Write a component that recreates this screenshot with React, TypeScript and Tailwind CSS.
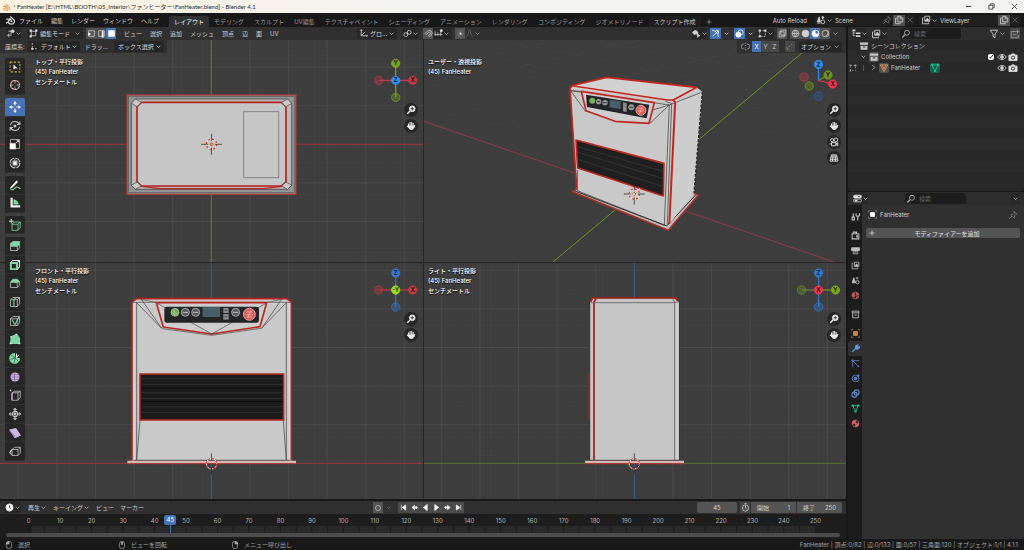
import React from "react";

type P = { children?: React.ReactNode; className?: string };

const Ic = ({ children, className = "size-2.5" }: P) => (
  <svg viewBox="0 0 16 16" className={"shrink-0 " + className} fill="none" stroke="currentColor" strokeWidth="1.4" aria-hidden="true">
    {children}
  </svg>
);
const Chev = () => (
  <Ic className="size-[7px] text-[#b5b5b5]"><path d="M3.5 6 8 10.5 12.5 6" strokeWidth="1.8" /></Ic>
);

const Magnify = () => <Ic className="size-2.5 text-[#b0b0b0]"><circle cx="9.5" cy="6" r="4" /><path d="M6.5 9 2 13.5" strokeWidth="2" /></Ic>;
const Pin = () => <Ic className="size-2.5 text-[#8a8a8a]"><path d="m9.5 2 4.5 4.5-1.5.7-2 2 .2 2.8-1.2 1-5-5 1-1.2 2.6.2 2-2zM6.5 9.5 2 14" strokeWidth="1.1" /></Ic>;
const Copy = () => <Ic><path d="M6 2h4.500l3.500 3.500V11H6zM10 2v4h4M5 5H2.500v9H10v-2" /></Ic>;
const Close = () => <Ic className="size-2 text-[#6a6a6a]"><path d="m3 3 10 10M13 3 3 13" /></Ic>;
const SceneIc = () => <Ic><path d="M5 3 2 11h5zM10 2l3 2-3 2z" fill="currentColor" /><circle cx="11" cy="11" r="3" /><path d="M2 13h5" /></Ic>;
const Layers = () => <Ic><path d="M6 2h8v8H6zM4 4.500H2.500V14H12v-2" /><path d="m7 9 3-4 3 4z" fill="currentColor" /></Ic>;
const Box = () => <Ic><path d="M1.500 2.500h13v3.500h-13zM2.500 7.500h11V14h-11z" fill="currentColor" stroke="none" /><path d="M6 9.500h4" stroke="#282828" strokeWidth="1.600" /></Ic>;
const Camera = () => <Ic className="size-2.5 text-[#e0e0e0]"><path d="M1.500 5h3l1.500-2h4l1.500 2h3v8.500h-13z" fill="currentColor" /><circle cx="8" cy="9" r="2.600" stroke="#282828" fill="#e0e0e0" /></Ic>;
const Eye = () => <Ic className="size-2.5 text-[#d0d0d0]"><path d="M1 8q7-8.500 14 0-7 8.500-14 0z" /><circle cx="8" cy="8" r="2.300" fill="currentColor" /></Ic>;
const BlenderIc = ({ c, className }: { c: string; className: string }) => (
  <Ic className={className}>
    <path d="M8.500 2.500 14 7.500q2 2 1 4-1.300 3-4.800 3Q6 14.500 5.200 11L1.500 13M2 6.500h7M5.200 10 10 6" stroke={c} strokeWidth="1.900" />
    <circle cx="10.200" cy="10" r="1.700" fill={c} stroke="none" />
  </Ic>
);

const Menu = ({ children }: P) => <button type="button" className="whitespace-nowrap">{children}</button>;

const workspaces = ["モデリング", "スカルプト", "UV編集", "テクスチャペイント", "シェーディング", "アニメーション", "レンダリング", "コンポジティング", "ジオメトリノード"];

function TitleBar() {
  return (
    <header className="flex h-[13px] shrink-0 items-center gap-[3px] bg-linear-to-r from-[#fcf2df] to-[#f3f3f1] to-40% pl-[2px] text-[#2a2a2a]">
      <BlenderIc c="#e07a1c" className="size-2" />
      <h1 className="grow whitespace-nowrap font-[Lato,'Noto_Sans_CJK_JP',sans-serif] text-[6px] leading-none">
        * FanHeater [E:\HTML\BOOTH\05_Interior\ファンヒーター\FanHeater.blend] - Blender 4.1
      </h1>
      <button type="button" aria-label="最小化" className="flex w-5 justify-center"><Ic className="size-[7px]"><path d="M2 8h12" strokeWidth="2" /></Ic></button>
      <button type="button" aria-label="元に戻す" className="flex w-5 justify-center"><Ic className="size-[7px]"><path d="M2 5h9v9H2zM5 4V2h9v9h-2" strokeWidth="1.800" /></Ic></button>
      <button type="button" aria-label="閉じる" className="flex w-5 justify-center"><Ic className="size-[7px]"><path d="m2 2 12 12M14 2 2 14" strokeWidth="1.800" /></Ic></button>
    </header>
  );
}

function TopBar() {
  return (
    <div className="flex h-[14px] shrink-0 items-center bg-[#181818] pl-[5px] text-[#cfcfcf]">
      <BlenderIc c="#d8d8d8" className="mr-1 size-2.5" />
      <nav className="flex gap-2">
        {["ファイル", "編集", "レンダー", "ウィンドウ", "ヘルプ"].map((m) => <Menu key={m}>{m}</Menu>)}
      </nav>
      <nav className="ml-2.5 flex h-full items-end text-[#989898]">
        <button type="button" className="h-[11px] rounded-t-xs bg-[#303030] px-[5px] text-white">レイアウト</button>
        {workspaces.map((w) => <button type="button" key={w} className="h-[11px] whitespace-nowrap px-[5px]">{w}</button>)}
        <button type="button" className="h-[11px] whitespace-nowrap bg-[#1e1e1e] px-[5px] text-[#c8c8c8]">スクリプト作成</button>
        <button type="button" aria-label="ワークスペースを追加" className="flex h-[11px] items-center px-1"><Ic className="size-2"><path d="M8 3v10M3 8h10" /></Ic></button>
      </nav>
      <span className="ml-auto mr-[7px] whitespace-nowrap">Auto Reload</span>
      <div className="mr-1 flex h-[11px] w-[101px] items-center rounded-xs bg-[#1f1f1f] pl-0.5">
        <SceneIc /><Chev />
        <input aria-label="シーン" defaultValue="Scene" className="ml-0.5 w-0 grow bg-transparent outline-none" />
        <Pin />
        <button type="button" aria-label="新規シーン" className="ml-px flex h-[11px] items-center bg-[#505050] px-px"><Copy /></button>
        <span className="px-px"><Close /></span>
      </div>
      <div className="mr-1 flex h-[11px] w-[101px] items-center rounded-xs bg-[#1f1f1f] pl-0.5">
        <Layers /><Chev />
        <input aria-label="ビューレイヤー" defaultValue="ViewLayer" className="ml-0.5 w-0 grow bg-transparent outline-none" />
        <button type="button" aria-label="新規レイヤー" className="flex h-[11px] items-center bg-[#505050] px-px"><Copy /></button>
        <span className="px-px"><Close /></span>
      </div>
    </div>
  );
}

const Drop = ({ label, value, icon, className = "" }: { label: string; value: string; icon?: React.ReactNode; className?: string }) => (
  <label className={"flex h-[11px] items-center rounded-xs bg-[#262626] px-0.5 text-[#dcdcdc] " + className}>
    {icon}
    <select aria-label={label} className="w-0 grow appearance-none bg-transparent pl-[2px] outline-none">
      <option>{value}</option>
    </select>
    <Chev />
  </label>
);
const IconBtn = ({ label, children, className = "" }: P & { label: string }) => (
  <button type="button" aria-label={label} className={"flex h-[11px] items-center justify-center " + className}>{children}</button>
);

function ViewHeader() {
  return (
    <div className="flex h-[13px] shrink-0 items-center bg-[#303030] pl-1.5 pr-1.5 text-[#cfcfcf]">
      <div className="flex flex-1 items-center">
        <IconBtn label="エディタータイプ" className="mr-1.5 w-[15px] rounded-xs bg-[#262626]">
          <Ic className="size-[9px]"><path d="M1 11h9M5 8v7M4 4h9M9 2v8" /><circle cx="12" cy="4" r="2.500" fill="currentColor" /></Ic><Chev />
        </IconBtn>
        <Drop label="モード" value="編集モード" className="mr-[3px] w-[56px]" icon={<Ic className="size-[9px]"><path d="M4 4h8v8H4z" /><path d="M1 1h4v4H1zM11 1h4v4h-4zM1 11h4v4H1z" fill="currentColor" stroke="none" /></Ic>} />
        <IconBtn label="頂点選択" className="w-2.5 bg-[#505050]"><Ic className="size-[9px]"><path d="M3 3h10v10H3z" /><circle cx="4" cy="9" r="2.300" fill="white" stroke="none" /></Ic></IconBtn>
        <IconBtn label="辺選択" className="w-2.5 bg-[#505050]"><Ic className="size-[9px]"><path d="M3 3h10v10H3z" /><path d="M10 3v12" stroke="white" strokeWidth="3" /></Ic></IconBtn>
        <IconBtn label="面選択" className="mr-2 w-2.5 bg-[#4772b3]"><Ic className="size-[9px]"><path d="M3 3h10v10H3z" fill="white" stroke="white" /></Ic></IconBtn>
        <nav className="flex gap-2">
          {["ビュー", "選択", "追加", "メッシュ", "頂点", "辺", "面", "UV"].map((m) => <Menu key={m}>{m}</Menu>)}
        </nav>
      </div>
      <div className="mr-2 flex items-center">
        <Drop label="座標系" value="グロ…" className="mr-1.5 w-10" icon={<Ic className="size-[9px]"><path d="M4 1v11h11M4 12l7-7M2 3l2-2 2 2M13 10l2 2-2 2" /></Ic>} />
        <IconBtn label="ピボット" className="mr-1 w-4 rounded-xs bg-[#262626]"><Ic className="size-[9px]"><circle cx="5" cy="10" r="3.500" /><circle cx="11" cy="6" r="3.500" /><circle cx="8" cy="8" r="1" fill="currentColor" /></Ic><Chev /></IconBtn>
        <IconBtn label="スナップ" className="w-2.5 bg-[#545454]"><Ic className="size-[9px]"><path d="m2 8 4-4q4-3 7 0t0 7l-3 3-2-2 3-3q1-2 0-3t-3 0L4 10z" /></Ic></IconBtn>
        <IconBtn label="スナップ先" className="mr-1 w-[18px] bg-[#262626]"><Ic className="size-[9px]"><path d="M2 4v8M7 6v6M12 4v8M1 10h14" /><circle cx="13" cy="3" r="2" fill="white" /></Ic><Chev /></IconBtn>
        <IconBtn label="プロポーショナル編集" className="w-2.5 bg-[#545454]"><Ic className="size-[9px]"><circle cx="8" cy="8" r="5" stroke="#777" /><circle cx="8" cy="8" r="2" fill="white" stroke="none" /></Ic></IconBtn>
        <IconBtn label="減衰" className="w-4 text-[#777] opacity-80"><Ic className="size-[9px]"><path d="M1 14q4 0 5-7t2-5q1-1 2 5t5 7" /></Ic><Chev /></IconBtn>
      </div>
      <div className="flex flex-1 items-center justify-end">
        <IconBtn label="表示可能" className="mr-[3px] w-[15px] bg-[#262626]"><Ic className="size-[9px]"><path d="M1 6q4-6 9-1 2 3-2 4-6 2-7-3z" fill="currentColor" /><path d="m9 8 5 4-3 1-1 2z" fill="currentColor" /></Ic><Chev /></IconBtn>
        <IconBtn label="ギズモ" className="w-[11px] bg-[#4772b3] text-white"><Ic className="size-[9px]"><path d="M2 2q10 2 11 12M3 13 13 3M8 3h5v5" /></Ic></IconBtn>
        <IconBtn label="ギズモ設定" className="mr-[3px] w-2.5"><Chev /></IconBtn>
        <IconBtn label="オーバーレイ" className="w-[11px] bg-[#4772b3] text-white"><Ic className="size-[9px]"><circle cx="6" cy="10" r="4.500" fill="currentColor" /><circle cx="10" cy="6" r="4.500" /></Ic></IconBtn>
        <IconBtn label="オーバーレイ設定" className="mr-0.5 w-2.5"><Chev /></IconBtn>
        <IconBtn label="メッシュ編集表示" className="mr-[3px] w-[17px] bg-[#262626]"><Ic className="size-[9px]"><path d="M3 3h10v10H3z" strokeDasharray="3 2" /><path d="M1 1h4v4H1zM11 1h4v4h-4zM1 11h4v4H1z" fill="currentColor" stroke="none" /></Ic><Chev /></IconBtn>
        <IconBtn label="透過" className="mr-[3px] w-2.5 bg-[#505050]"><Ic className="size-[9px]"><path d="M2 5h9v9H2zM5 2h9v9H5z" /></Ic></IconBtn>
        <IconBtn label="ワイヤーフレーム" className="w-2.5 bg-[#505050]"><Ic className="size-[9px]"><circle cx="8" cy="8" r="6" /><path d="M2 8h12M8 2q-5 6 0 12 5-6 0-12" /></Ic></IconBtn>
        <IconBtn label="ソリッド" className="w-2.5 bg-[#505050]"><Ic className="size-[9px]"><circle cx="8" cy="8" r="6" fill="currentColor" /></Ic></IconBtn>
        <IconBtn label="マテリアル" className="w-2.5 bg-[#4772b3] text-white"><Ic className="size-[9px]"><circle cx="8" cy="8" r="6" /><path d="M8 2a6 6 0 0 0 0 12 6 6 0 0 0 6-6H8z" fill="currentColor" stroke="none" /></Ic></IconBtn>
        <IconBtn label="レンダー" className="w-2.5 bg-[#505050]"><Ic className="size-[9px]"><circle cx="8" cy="8" r="6" /><path d="M11 4q4 6-3 8" /></Ic></IconBtn>
        <IconBtn label="シェーディング設定" className="w-2.5"><Chev /></IconBtn>
      </div>
    </div>
  );
}

const step = 38.6;
const range = (a: number, b: number) => Array.from({ length: b - a + 1 }, (_, i) => a + i);

function Grid({ ox, oy }: { ox: number; oy: number }) {
  return (
    <g>
      <g stroke="#424242" strokeWidth="0.5">
        {range(-60, 60).map((i) => <path key={i} d={`M${ox + (i * step) / 10} 0V550`} />)}
        {range(-110, 60).map((i) => <path key={i} d={`M0 ${oy + (i * step) / 10}H1024`} />)}
      </g>
      <g stroke="#4d4d4d" strokeWidth="0.8">
        {range(-6, 6).map((i) => <path key={i} d={`M${ox + i * step} 0V550`} />)}
        {range(-6, 6).map((i) => <path key={i} d={`M0 ${oy + i * step}H1024`} />)}
      </g>
    </g>
  );
}

const RED = "#c13b45", GREEN = "#79a31c", BLUE = "#2f7ad0";

type Ball = { x: number; y: number; c: string; t?: string; hollow?: boolean; line?: boolean };
function Gizmo({ cx, cy, balls }: { cx: number; cy: number; balls: Ball[] }) {
  return (
    <g transform={`translate(${cx} ${cy})`}>
      {balls.filter((b) => b.line).map((b, i) => <path key={i} d={`M0 0L${b.x} ${b.y}`} stroke={b.c} strokeWidth="1.2" />)}
      {balls.map((b, i) => (
        <g key={i}>
          <circle cx={b.x} cy={b.y} r="4.200" fill={b.c} fillOpacity={b.hollow ? 0.35 : 1} stroke={b.c} strokeWidth="0.7" />
          {b.t && <text x={b.x} y={b.y + 2} fontSize="6" fontWeight="600" textAnchor="middle" fill="#101010">{b.t}</text>}
        </g>
      ))}
    </g>
  );
}

function Cursor({ x, y, arms = true }: { x: number; y: number; arms?: boolean }) {
  return (
    <g transform={`translate(${x} ${y})`} fill="none">
      <circle r="5.200" stroke="#f4f4f4" />
      <circle r="5.200" stroke="#cf332b" strokeWidth="1.200" strokeDasharray="2 2.080" />
      <path d="M0-10.500v7M0 3.500v7" stroke="#1c1c1c" strokeWidth="0.7" />
      {arms && <path d="M-10.500 0h7M3.500 0h7" stroke="#1c1c1c" strokeWidth="0.7" />}
      {arms && <circle r="1.400" fill="#e8a040" stroke="#6b3d10" strokeWidth="0.500" />}
    </g>
  );
}

function Panel() {
  return (
    <g>
      <rect x="133" y="140" width="284" height="48" rx="8" fill="#232426" />
      <circle cx="165" cy="157" r="12" fill="#6fae52" stroke="#b4c8a8" strokeWidth="2" />
      <path d="M159 151l12 12M157 158l9 7" stroke="#dfeeda" strokeWidth="2" />
      {[196, 227, 347].map((x) => (
        <g key={x}><circle cx={x} cy="157" r="12" fill="#55585a" stroke="#a8a8a8" strokeWidth="3" /><path d={`M${x - 8} 157h16`} stroke="#c4c4c4" strokeWidth="3" /></g>
      ))}
      <rect x="248" y="141" width="52" height="30" fill="#466069" />
      <rect x="310" y="144" width="16" height="15" fill="#8b8b8b" /><rect x="310" y="162" width="16" height="17" fill="#8b8b8b" />
      <path d="M313 151h10M313 170h10" stroke="#333" strokeWidth="2" />
      <circle cx="388" cy="163" r="18" fill="#d75c58" stroke="#e6a29e" strokeWidth="3" />
      <path d="M378 156h20M377 164h22M380 171h16M391 151l-8 23" stroke="#f1c0bd" strokeWidth="2" />
    </g>
  );
}

const svgCls = "absolute inset-0 size-full font-[Inter,sans-serif]";

function TopView() {
  return (
    <svg viewBox="0 40 423 222" preserveAspectRatio="xMidYMid slice" className={svgCls}>
      <Grid ox={211.3} oy={144.3} />
      <path d="M0 144.300H423" stroke="#98343d" /><path d="M211.300 40V262" stroke="#5f8220" />
      <g transform="translate(120 50) scale(.3333)" fill="none">
        <rect x="21" y="135" width="507" height="298" fill="#949494" stroke="#a83a35" strokeWidth="4" />
        <rect x="26" y="140" width="497" height="288" stroke="#555" strokeWidth="2" />
        <path d="M46 147H503L515 160V406L503 418H46L34 406V160z" fill="#b9b9b9" stroke="#4a4a4a" strokeWidth="2.500" />
        <path d="M64 157H485L498 170V396L485 408H64L51 396V170z" fill="#c6c6c6" stroke="#b3231f" strokeWidth="5" />
        <path d="M51 397 64 409 120 416H430L485 409 498 397" stroke="#c0241d" strokeWidth="4" />
        <g fill="#c8c8c8" stroke="#444" strokeWidth="2"><path d="M46 147l18 10-13 13-17-10zM503 147l-18 10 13 13 17-10zM34 406l17-10 13 12-18 10zM515 406l-17-10-13 12 18 10z" /></g>
        <rect x="371" y="185" width="105" height="198" stroke="#858585" strokeWidth="3" />
      </g>
      <Cursor x={211.5} y={144.3} />
      <Gizmo cx={395.7} cy={80.4} balls={[{ x: -17, y: 0, c: RED, hollow: true, line: true }, { x: 17, y: 0, c: RED, t: "X", line: true }, { x: 0, y: -17, c: GREEN, t: "Y", line: true }, { x: 0, y: 17, c: GREEN, hollow: true, line: true }, { x: 0, y: 0, c: "#2f8cf0", t: "Z" }]} />
    </svg>
  );
}

function UserView() {
  return (
    <svg viewBox="424 40 422 222" preserveAspectRatio="xMidYMid slice" className={svgCls}>
      <g stroke="#484848" strokeWidth="0.8">
        <path d="M423 52 846 150M423 88 640 40M423 121 790 40M500 40 846 110M590 40 846 85M680 40 846 66M423 140 846 48M423 70 560 40M423 45 846 125" opacity=".65" />
      </g>
      <path d="M423 121 834 262" stroke="#8f3a49" /><path d="M553 262 815 42" stroke="#6f9422" />
      <g transform="translate(550 50) scale(.3333)" fill="none" strokeLinejoin="round">
        <path d="M67 425 82 415 432 430 445 435 355 541z" fill="#bdbdbd" stroke="#a8302b" strokeWidth="5" />
        <path d="M72 422 350 528 438 434" stroke="#2c2c2c" strokeWidth="3" />
        <path d="M60 115 75 106 170 82 440 112 457 125 432 430 350 524 82 422z" fill="#c9c9c9" />
        <path d="M375 155 457 125 432 430 358 522z" fill="#cdcdcd" />
        <path d="M60 115 75 106 170 82 440 112 370 150z" fill="#d2d2d2" />
        <path d="M457 125 432 430" stroke="#222" strokeWidth="4" strokeDasharray="9 4" />
        <path d="M62 122 358 165 452 128M358 165 343 526M82 422 343 526M347 155 365 160 352 524M83 360 82 422M100 125 62 122 108 186M300 220 358 165 195 214M125 175 195 214" stroke="#333" strokeWidth="2" />
        <path d="M60 115 68 106 170 82 440 112" stroke="#c4261f" strokeWidth="5" />
        <path d="M440 112 370 150 352 150 70 108" stroke="#c4261f" strokeWidth="5" />
        <path d="M367 149Q378 154 375 168L358 522" stroke="#c4261f" strokeWidth="6" />
        <path d="M60 115 80 418" stroke="#b62b25" strokeWidth="5" />
        <path d="M94 124 313 158 297 220 195 214 108 182z" fill="#cecece" stroke="#bf2720" strokeWidth="5" />
        <path d="M108 134 298 164 290 205 111 171z" fill="#242528" />
        <circle cx="127" cy="152" r="9" fill="#75b35a" /><circle cx="146" cy="155" r="8" fill="#9a9a9a" /><circle cx="165" cy="158" r="8" fill="#9a9a9a" />
        <path d="M141 155h10M160 158h10" stroke="#303030" strokeWidth="3" />
        <path d="M179 149l33 5v23l-33-5z" fill="#466069" /><path d="M219 157l11 2v27l-11-2z" fill="#8c8c8c" /><circle cx="244" cy="172" r="9" fill="#9a9a9a" /><path d="M238 172h12" stroke="#303030" strokeWidth="3" />
        <circle cx="273" cy="181" r="15" fill="#dc5a55" stroke="#eaa29e" strokeWidth="3" /><path d="M265 176h16M264 183h18M276 171l-7 20" stroke="#f5c4c0" strokeWidth="2" />
        <path d="M78 270 342 340 340 438 83 354z" fill="#1f1f20" stroke="#bd2a24" strokeWidth="5" />
        <path d="M82 290 340 364M82 306 340 386M83 328 340 410" stroke="#343434" strokeWidth="3" />
      </g>
      <Cursor x={634.3} y={194} />
      <path d="m628 188 12 12M640 188l-12 12" stroke="#efc9b8" strokeWidth="0.800" />
      <Gizmo cx={818.5} cy={80.500} balls={[{ x: -14.500, y: -3.500, c: RED, hollow: true }, { x: 0, y: 15.700, c: "#2d5ea0", hollow: true }, { x: -9.300, y: 5.500, c: GREEN, hollow: true }, { x: 0, y: -16, c: "#2f8cf0", t: "Z", line: true }, { x: 9.500, y: -5.500, c: "#6b9420", t: "Y", line: true }, { x: 14.200, y: 3.500, c: "#f0354f", t: "X", line: true }]} />
    </svg>
  );
}

function FrontView() {
  return (
    <svg viewBox="0 263 423 236" preserveAspectRatio="xMidYMid slice" className={svgCls}>
      <Grid ox={211.3} oy={463.3} />
      <path d="M0 463.300H423" stroke="#98343d" /><path d="M211.300 262V499" stroke="#2d5f9c" />
      <g transform="translate(120 260) scale(.3333)" fill="none" strokeLinejoin="round">
        <path d="M36 604V126L50 115H500L514 126V604z" fill="#c9c9c9" />
        <path d="M36 602V126L50 116H500L514 126V602" stroke="#b3231f" strokeWidth="5" />
        <path d="M42 602V128H508V602" stroke="#d8d8d8" strokeWidth="5" />
        <path d="M50 600V127M499 600V127M38 127H512M50 128 125 205 62 115M499 128 425 205 487 115M50 600 60 482M499 600 490 482" stroke="#3c3c3c" strokeWidth="2" />
        <path d="M62 118 108 127M487 118 441 127" stroke="#555" strokeWidth="2" />
        <path d="M109 128H440L420 200 275 222 130 201z" fill="#cdcdcd" stroke="#bb261f" strokeWidth="5" />
        <path d="M112 130 275 222 438 130M128 206 275 226 424 205" stroke="#444" strokeWidth="2" />
        <Panel />
        <rect x="60" y="342" width="431" height="138" fill="#1b1b1b" stroke="#b52a25" strokeWidth="5" />
        <path d="M62 356H489M62 373H489M62 398H489M62 415H489M62 440H489M62 457H489" stroke="#2a2a2a" strokeWidth="4" />
        <path d="M62 384H489M62 425H489" stroke="#0c0c0c" strokeWidth="3" />
        <path d="M40 601H510" stroke="#333" strokeWidth="3" />
        <path d="M22 606H528" stroke="#dab6b2" strokeWidth="7" /><path d="M30 611H520" stroke="#a83a35" strokeWidth="3" />
      </g>
      <Cursor x={211.5} y={463.8} arms={false} />
      <Gizmo cx={395.7} cy={290} balls={[{ x: -17, y: 0, c: RED, hollow: true, line: true }, { x: 17, y: 0, c: RED, t: "X", line: true }, { x: 0, y: -17, c: BLUE, t: "Z", line: true }, { x: 0, y: 17, c: BLUE, hollow: true, line: true }, { x: 0, y: 0, c: "#98e01a", t: "-Y" }]} />
    </svg>
  );
}

function RightView() {
  return (
    <svg viewBox="424 263 422 236" preserveAspectRatio="xMidYMid slice" className={svgCls}>
      <Grid ox={634.3} oy={463.3} />
      <path d="M423 463.300H846" stroke="#567322" /><path d="M634.300 262V499" stroke="#2d5f9c" />
      <g transform="translate(560 260) scale(.3333)" fill="none" strokeLinejoin="round">
        <path d="M89 602V126L98 114H347L358 126V602z" fill="#c6c6c6" stroke="#303030" strokeWidth="3" />
        <path d="M92 128H356M344 600V127L338 115" stroke="#4a4a4a" strokeWidth="2" />
        <path d="M352 600V128" stroke="#d2d2d2" strokeWidth="8" />
        <path d="M92 126 98 114H347L353 124" stroke="#b3231f" strokeWidth="5" />
        <path d="M102 602V127L108 116" stroke="#a8352f" strokeWidth="6" />
        <path d="M87 340V478" stroke="#b3231f" strokeWidth="3" />
        <path d="M90 601H358" stroke="#333" strokeWidth="3" />
        <path d="M75 606H372" stroke="#dab6b2" strokeWidth="7" /><path d="M75 611H372" stroke="#a83a35" strokeWidth="4" />
      </g>
      <Cursor x={634.3} y={463.8} arms={false} />
      <Gizmo cx={818.5} cy={290} balls={[{ x: -17, y: 0, c: "#6b9130", hollow: true, line: true }, { x: 17, y: 0, c: GREEN, t: "Y", line: true }, { x: 0, y: -17, c: BLUE, t: "Z", line: true }, { x: 0, y: 17, c: BLUE, hollow: true, line: true }, { x: 0, y: 0, c: "#f0354f", t: "X" }]} />
    </svg>
  );
}

const NAV: [string, React.ReactNode][] = [
  ["ズーム", <Ic className="size-2.5" key="z"><circle cx="10" cy="6" r="4.500" fill="currentColor" /><path d="M6.500 9.500 2 14" strokeWidth="2.400" /><path d="M10 3.500v5M7.500 6h5" stroke="#222" /></Ic>],
  ["移動", <Ic className="size-2.5" key="p"><path d="M4 8V4.500M6.500 7V2.500M9 7V2M11.500 8V3.500M4.500 10 2 8M13 10l1-3" strokeWidth="1.700" strokeLinecap="round" /><path d="M3.500 7h9.500v3.500q-1 4-4.500 4-3 0-5-4z" fill="currentColor" stroke="none" /></Ic>],
  ["カメラ", <Ic className="size-2.5" key="c"><circle cx="5" cy="5" r="2.500" /><circle cx="11" cy="4.500" r="3" /><path d="M4 9h7v5H4zM11 11l3-2v5l-3-2M1 11h3" /></Ic>],
  ["透視投影", <Ic className="size-2.5" key="g"><path d="M4 3h8l2.500 10h-13zM3 6.500h10M2.300 10h11.400M6.500 3 5.500 13M9.500 3l1 10" /></Ic>],
];

function Pane({ title, unit, nav = 2, top, right, children }: { title: string; unit?: boolean; nav?: number; top?: boolean; right?: boolean; children: React.ReactNode }) {
  return (
    <section className="relative overflow-hidden bg-[#3d3d3d]">
      {children}
      <div className={"absolute whitespace-nowrap font-medium leading-[10px] text-white [text-shadow:0_1px_1px_#000] " + (top ? "top-[17px] " : "top-[3px] ") + (right ? "left-1" : "left-[35px]")}>
        <p>{title}</p>
        <p>(45) FanHeater</p>
        {unit && <p>センチメートル</p>}
      </div>
      <div className={"absolute right-[5px] flex flex-col gap-0.5 " + (top ? "top-[63px]" : "top-[49px]")}>
        {NAV.slice(0, nav).map(([l, i]) => (
          <button type="button" key={l} aria-label={l} className="flex size-3.5 items-center justify-center rounded-full bg-[#262626] text-[#e8e8e8]">{i}</button>
        ))}
      </div>
    </section>
  );
}

const G = "#7fd8a4", V = "#cdb4e6";
const cube = "M2 5 5 2h9v8.500L11 14H2zM2 5h9v9M11 5l3-3";
const toolGroups: { cls: string; tools: [string, React.ReactNode][] }[] = [
  { cls: "h-[37px]", tools: [
    ["ボックス選択", <><path d="M1.500 1.500h13v13h-13z" stroke="#c9a640" strokeDasharray="3 2" /><path d="M6 4.500v7l2-2 3.500.5z" fill="white" stroke="none" /></>],
    ["カーソル", <><circle cx="8" cy="8" r="6" stroke="#ddd" /><circle cx="8" cy="8" r="6" stroke="#c25b5b" strokeDasharray="2 2.700" /><path d="M8 2v4M8 10v4M2 8h4M10 8h4" strokeWidth="1" /></>],
  ] },
  { cls: "h-[75px]", tools: [
    ["移動", <><path d="M8 3v3M8 10v3M3 8h3M10 8h3" /><path d="M8 0 5.500 3.500h5zM8 16l2.500-3.500h-5zM0 8l3.500-2.500v5zM16 8l-3.500-2.500v5z" fill="currentColor" stroke="none" /></>],
    ["回転", <><path d="M2 7q1-5 6-5 4 0 6 4M14 9q-1 5-6 5-4 0-6-4M14.500 2v4h-4M1.500 14v-4h4" /><path d="M8 6.500 9.500 8 8 9.500 6.500 8z" fill="currentColor" /></>],
    ["スケール", <><path d="M2 2h12v12H2z" strokeWidth="1" /><path d="M1 7h8v8H1z" fill="white" stroke="none" /><path d="m9 7 4-4M10 3h3v3" /></>],
    ["トランスフォーム", <><circle cx="8" cy="8" r="6.500" strokeDasharray="8 2.200" /><path d="M5.500 5.500h5v5h-5z" fill="white" /><path d="M8 2v1.500M8 12.500v1.500M2 8h1.500M12.500 8h1.500" /></>],
  ] },
  { cls: "h-[37px]", tools: [
    ["アノテート", <><path d="M2 11 10 2l2 2-8 8-3 1z" fill="white" stroke="none" /><path d="M2 14q4 1 6-2t7 1" stroke={G} /></>],
    ["メジャー", <><path d="M2 1h3v10h10v3H2z" fill="#eee" stroke="none" /><path d="M6 3q6 1 7 7H6z" fill={G} stroke="none" /></>],
  ] },
  { cls: "h-[18px]", tools: [["立方体を追加", <><path d="M4 7 7 4h8v8l-3 3H4zM4 7h8v8M12 7l3-3" stroke={G} strokeWidth="1.100" /><path d="M3 0v6M0 3h6" stroke="#ccf0dc" /></>]] },
  { cls: "h-[224px]", tools: [
    ["押し出し", <><path d={cube} strokeWidth="1" /><path d="M2 5 5 2h9v4l-3 3H2z" fill={G} stroke="none" /></>],
    ["面を差し込む", <><path d={cube} stroke="#ddd" /><path d="M2.500 5.500h8v8h-8z" stroke={G} strokeWidth="2.600" /></>],
    ["ベベル", <><path d="M2 7 5 3h6l3 3v5l-3 3H2zM2 7h9v7" strokeWidth="1" /><path d="M2 7 5 3h6l3 3-2 2z" fill={G} stroke="none" /></>],
    ["ループカット", <><path d={cube} strokeWidth="1" /><path d="M6.500 14V5l3-3" stroke={G} /></>],
    ["ナイフ", <><path d={cube} strokeWidth="1" /><path d="m4 6 4 7 3-6 2-3" stroke={G} /></>],
    ["ポリビルド", <><path d="m2 14 1-9 7-3 4 5v7z" fill={G} stroke={G} /><path d="M1 13h2v2H1zM13 13h2v2h-2zM2 4h2v2H2zM9 1h2v2H9z" fill="white" stroke="none" /></>],
    ["スピン", <><path d="M7 2a6.500 6.500 0 1 0 7 7L8 8z" fill={G} stroke={G} /><path d="M8 8 3 4M8 8 2 10M8 8l-1 6M8 8l5 5" stroke="#2a6647" strokeWidth="1" /><path d="M10 2v5l3-3" stroke="white" /></>],
    ["スムーズ", <><circle cx="8" cy="8" r="6" fill={V} stroke="none" /><path d="M2 8h12M8 2q-2 6 0 12M3 5h10M3 11h10" stroke="#70588c" strokeWidth=".8" /></>],
    ["辺をスライド", <><path d="M4 5 7 3h8v8l-3 4H4zM4 5h8v10M12 5l3-2" strokeWidth="1" /><path d="M1 1h2v2H1z" fill="white" stroke="none" /><path d="M4 5v10" stroke={V} /></>],
    ["収縮/膨張", <><circle cx="8" cy="8" r="3.500" /><path d="M8 2v2M8 12v2M2 8h2M12 8h2M6 2.500l2-2 2 2M6 13.500l2 2 2-2M2.500 6l-2 2 2 2M13.500 6l2 2-2 2" /><circle cx="8" cy="8" r="1.200" fill={V} /></>],
    ["せん断", <><path d="m1 4 8-2 6 9-7 3z" fill={V} stroke={V} /><path d="m1 5 7 8" stroke="#8c73a8" /></>],
    ["リップ", <><path d="M4 6 8 3h7v8l-3 3H4zM4 6h8v8M12 6l3-3" strokeWidth="1" /><path d="M4 6 1 10l3 3" stroke="#ddd" /></>],
  ] },
];

function Toolbar() {
  return (
    <div className="absolute left-[5px] top-[18px] flex w-5 flex-col gap-[3px]">
      {toolGroups.map((g, i) => (
        <div key={i} className={"flex flex-col overflow-hidden rounded-xs bg-[#262626] " + g.cls}>
          {g.tools.map(([name, icon]) => (
            <button type="button" key={name} aria-label={name} className={"flex w-full flex-1 items-center justify-center border-b border-[#303030] text-[#c9c9c9] " + (name === "移動" ? "bg-[#4772b3] text-white" : "")}>
              <Ic className="size-3">{icon}</Ic>
            </button>
          ))}
        </div>
      ))}
    </div>
  );
}

function Viewport() {
  return (
    <main className="flex min-h-0 grow flex-col overflow-hidden rounded-xs">
      <ViewHeader />
      <div className="relative grid min-h-0 grow grid-cols-[423fr_422fr] grid-rows-[222fr_236fr] gap-px bg-[#262626]">
        <Pane title="トップ・平行投影" unit top><TopView /></Pane>
        <Pane title="ユーザー・透視投影" nav={4} top right><UserView /></Pane>
        <Pane title="フロント・平行投影" unit><FrontView /></Pane>
        <Pane title="ライト・平行投影" unit right><RightView /></Pane>
        <div className="absolute left-0 top-0 flex h-[13px] items-center rounded-br-xs bg-[#303030] pl-[5px] pr-[3px] text-[#cfcfcf]">
          <span className="mr-[3px] whitespace-nowrap">座標系:</span>
          <Drop label="座標系の向き" value="デフォルト" className="mr-[5px] w-[52px]" icon={<Ic className="size-[9px]"><path d="M4 2v10h9" strokeDasharray="3 2" /><circle cx="4" cy="12" r="1.500" fill="currentColor" /></Ic>} />
          <span className="mr-1.5 whitespace-nowrap">ドラッ…</span>
          <Drop label="ドラッグ" value="ボックス選択" className="w-[50px]" />
        </div>
        <div className="absolute right-0 top-0 flex h-[13px] items-center rounded-bl-xs bg-[#303030] pl-1 pr-1 text-[#cfcfcf]">
          <Ic className="mr-0.5 size-[9px] text-[#999]"><path d="M8 1v14" strokeDasharray="2 2" /><path d="M6 3 1 5v6l5 2M10 3l5 2v6l-5 2" /></Ic>
          <button type="button" className="h-[11px] w-[9px] bg-[#4772b3] text-white">X</button>
          <button type="button" className="h-[11px] w-[9px] bg-[#484848]">Y</button>
          <button type="button" className="mr-1.5 h-[11px] w-[9px] bg-[#484848]">Z</button>
          <IconBtn label="自動マージ" className="mr-1 w-2.5 bg-[#484848] text-[#888]"><Ic className="size-[9px]"><path d="M3 13 13 3M3 8v5h5" strokeDasharray="3 2" /></Ic></IconBtn>
          <button type="button" className="flex h-[11px] items-center gap-0.5 rounded-xs bg-[#262626] px-0.5">オプション<Chev /></button>
        </div>
        <Toolbar />
      </div>
    </main>
  );
}

const playIcons: [string, string][] = [
  ["先頭", "M3 2v12M13 2 5 8l8 6z"], ["前のキー", "M8 3 2 8l6 5zM12 5l3 3-3 3-3-3z"], ["逆再生", "M12 1 3 8l9 7z"],
  ["再生", "M4 1l9 7-9 7z"], ["次のキー", "M8 3l6 5-6 5zM4 5 1 8l3 3 3-3z"], ["末尾", "M13 2v12M3 2l8 6-8 6z"],
];

function Timeline() {
  return (
    <section className="mt-0.5 flex h-[38px] shrink-0 flex-col overflow-hidden rounded-xs bg-[#1d1d1d]">
      <div className="flex h-[13px] items-center bg-[#303030] pl-[5px] pr-1 text-[#cfcfcf]">
        <IconBtn label="エディタータイプ" className="mr-[7px] w-4 rounded-xs bg-[#262626]"><Ic className="size-[9px]"><circle cx="8" cy="8" r="6.500" fill="white" /><path d="M8 4v4l3 2" stroke="#222" /></Ic><Chev /></IconBtn>
        <nav className="flex items-center gap-1.5">
          <button type="button" className="flex items-center">再生<Chev /></button>
          <button type="button" className="flex items-center">キーイング<Chev /></button>
          <Menu>ビュー</Menu><Menu>マーカー</Menu>
        </nav>
        <div className="mx-auto flex items-center pr-1">
          <IconBtn label="自動キー" className="w-2.5 bg-[#545454]"><Ic className="size-2"><circle cx="8" cy="8" r="5" /></Ic></IconBtn>
          <span className="ml-0.5 mr-1.5 opacity-50"><Chev /></span>
          {playIcons.map(([l, d]) => (
            <IconBtn key={l} label={l} className="w-[11px] bg-[#4a4a4a] text-white"><Ic className="size-[7px]"><path d={d} fill="currentColor" /></Ic></IconBtn>
          ))}
        </div>
        <input aria-label="現在のフレーム" defaultValue="45" className="mr-[3px] h-[11px] w-10 rounded-xs bg-[#545454] text-center outline-none" />
        <IconBtn label="プレビュー範囲" className="w-2.5 bg-[#484848]"><Ic className="size-[9px]"><circle cx="8" cy="9" r="5.500" /><path d="M8 5v4l2 2M6 1h4" /></Ic></IconBtn>
        <label className="ml-px flex h-[11px] w-[45px] items-center bg-[#545454] px-1.5">開始<input defaultValue="1" className="w-0 grow bg-transparent text-right outline-none" /></label>
        <label className="ml-px flex h-[11px] w-[45px] items-center rounded-r-xs bg-[#545454] px-1.5">終了<input defaultValue="250" className="w-0 grow bg-transparent text-right outline-none" /></label>
      </div>
      <div className="relative ml-[13px] mr-[15px] h-[19px]">
        <div className="flex h-3 items-center text-[#b0b0b0]">
          {range(0, 25).map((n) => <span key={n} className="flex-1 text-center">{n * 10}</span>)}
        </div>
        <svg viewBox="-5 0 260 6" preserveAspectRatio="none" className="h-[7px] w-full">
          <rect x="1" width="249" height="6" fill="#292929" />
          {range(0, 50).map((n) => <path key={n} d={`M${n * 5} 0v6`} stroke="#181818" strokeWidth="0.3" />)}
        </svg>
        <div className="absolute left-[19.23%] top-px flex h-[18px] w-3 -translate-x-1/2 flex-col items-center">
          <span className="h-[10px] w-full rounded-xs bg-[#4772b3] text-center leading-[10px] text-white">45</span>
          <span className="w-px grow bg-[#4772b3]" />
        </div>
      </div>
      <div className="mx-1.5 h-1 rounded-full bg-[#4c4c4c]" />
    </section>
  );
}

const Search = () => (
  <label className="flex h-[11px] w-[61px] items-center gap-[3px] rounded-xs bg-[#1d1d1d] px-px">
    <Magnify />
    <input aria-label="検索" placeholder="検索" className="w-0 grow bg-transparent outline-none placeholder:text-[#666]" />
  </label>
);

function Outliner() {
  return (
    <section className="flex h-[164px] shrink-0 flex-col overflow-hidden rounded-xs bg-[#282828]">
      <div className="flex h-[13px] shrink-0 items-center bg-[#2d2d2d] pl-1 pr-1 text-[#cfcfcf]">
        <IconBtn label="エディタータイプ" className="mr-[5px] w-[15px] rounded-xs bg-[#262626]"><Ic className="size-[9px]"><path d="M2 2v10h4M2 7h4" /><path d="M1 1h5v3H1zM7 6h8v3H7zM7 11h8v3H7z" fill="currentColor" stroke="none" /></Ic><Chev /></IconBtn>
        <IconBtn label="表示モード" className="w-[15px] rounded-xs bg-[#262626]"><Layers /><Chev /></IconBtn>
        <div className="mx-auto pr-4"><Search /></div>
        <IconBtn label="フィルター" className="mr-[5px] w-[15px]"><Ic><path d="M2 2h12L9.500 8v6l-3-2V8z" /></Ic><Chev /></IconBtn>
        <IconBtn label="新規コレクション" className="w-2.5 bg-[#484848] text-[#999]"><Ic><path d="M2 4h7M2 4v10h11V9M5 9h5M12 1v6M9 4h6" /></Ic></IconBtn>
      </div>
      <div className="text-[#c8c8c8]">
        <div className="flex h-[11px] items-center gap-0.5 pl-[11px]"><Box /><span className="grow">シーンコレクション</span></div>
        <div className="flex h-[11px] items-center bg-[#2b2b2b] pl-3 pr-1.5">
          <Chev />
          <span className="ml-0.5 rounded-xs bg-[#505050]"><Box /></span>
          <span className="ml-0.5 grow">Collection</span>
          <input type="checkbox" defaultChecked aria-label="Collectionを表示" className="mr-[3px] size-1.5 accent-white" />
          <Eye /><span className="w-px" /><Camera />
        </div>
        <div className="flex h-[11px] items-center pl-px pr-1.5">
          <Ic className="size-2 text-[#999]"><path d="M3 3h10v10H3z" strokeDasharray="3 3" /><path d="M11 1h4v4h-4zM1 1h3v3H1zM1 12h3v3H1z" fill="currentColor" stroke="none" /></Ic>
          <span className="ml-1.5 h-1.5 w-px bg-[#555]" />
          <Ic className="ml-[6px] size-[7px]"><path d="m5 2 6 6-6 6" strokeWidth="1.800" /></Ic>
          <span className="ml-0.5 rounded-xs bg-[#505050] text-[#e39a5c]"><Ic><path d="M2 3h12L8 14zM5 3l3 7 3-7" /></Ic></span>
          <span className="ml-0.5">FanHeater</span>
          <span className="ml-2.5 rounded-xs bg-[#17604a] text-[#20c491]"><Ic><path d="M3 3h10L8 13z" /><path d="M2 2h2v2H2zM12 2h2v2h-2zM7 12h2v2H7z" fill="currentColor" /></Ic></span>
          <span className="grow" /><Eye /><span className="w-px" /><Camera />
        </div>
        {range(0, 9).map((i) => <div key={i} className="h-[11px] even:bg-[#2b2b2b]" />)}
      </div>
    </section>
  );
}

const tabs: { n: string; c: string; m: string; i: React.ReactNode }[] = [
  { n: "ツール", c: "text-[#c0c0c0]", m: "mb-1", i: <><path d="M4 2v6M2 9h4v5H2zM12 15V8M9 2v4q1 2 3 2t3-2V2" strokeWidth="2" /></> },
  { n: "レンダー", c: "text-[#c0c0c0]", m: "", i: <><path d="M2 5h12v9H2zM4 5V2h6v3" strokeWidth="1.800" /><path d="M10 8h2v3h-2z" fill="currentColor" /></> },
  { n: "出力", c: "text-[#c0c0c0]", m: "", i: <><path d="M1 3h14v5H1z" fill="currentColor" /><path d="M4 9h8v5H4zM6 11h4" /></> },
  { n: "ビューレイヤー", c: "text-[#c0c0c0]", m: "", i: <><path d="M6 2h8v8H6zM4 4H2v10h10v-2" /><path d="m7 9 3-4 3 4z" fill="currentColor" /></> },
  { n: "シーン", c: "text-[#c0c0c0]", m: "", i: <><path d="M5 3 2 12h6z" fill="currentColor" /><circle cx="11.500" cy="11" r="3" /><circle cx="11" cy="4" r="1.500" /></> },
  { n: "ワールド", c: "text-[#c75d62]", m: "mb-1", i: <><circle cx="8" cy="8" r="6" /><path d="M3 4q5 0 4 4l-2 3-3-3zM9 3l4 3-3 2zM10 10l3 1-3 2z" fill="currentColor" /></> },
  { n: "コレクション", c: "text-[#c0c0c0]", m: "mb-1", i: <path d="M2 2h12v3H2zM3 6v8h10V6M6 9h4" strokeWidth="1.600" /> },
  { n: "オブジェクト", c: "text-[#d18a3f]", m: "", i: <><path d="M4.500 4.500h7v7h-7z" fill="currentColor" /><path d="M1 4V1h3M12 1h3v3M15 12v3h-3M4 15H1v-3" strokeWidth="1" /></> },
  { n: "モディファイアー", c: "bg-[#303030] text-[#5d97e8]", m: "", i: <path d="m2 14 7-7M8.500 7.500Q7 3 12 2l-1 3 1 1 3-1q-1 5-5.500 3.500z" strokeWidth="2.400" fill="currentColor" /> },
  { n: "パーティクル", c: "text-[#5b83c8]", m: "", i: <><circle cx="3" cy="3" r="1.500" fill="currentColor" /><path d="m4 4 9 9M3 5v10M5 3h10" /><circle cx="13" cy="13" r="1" /></> },
  { n: "物理演算", c: "text-[#5b83c8]", m: "", i: <><circle cx="8" cy="8" r="6" /><circle cx="8" cy="8" r="2.500" fill="currentColor" /><circle cx="13" cy="3" r="1.500" fill="currentColor" /></> },
  { n: "コンストレイント", c: "text-[#5b83c8]", m: "", i: <><circle cx="6" cy="10" r="4.500" strokeWidth="2" /><circle cx="10" cy="6" r="4.500" strokeWidth="2" /></> },
  { n: "データ", c: "text-[#1fb383]", m: "", i: <><path d="M3 3h10L8 13z" strokeWidth="1.700" /><path d="M1 1h4v4H1zM11 1h4v4h-4zM6 11h4v4H6z" fill="currentColor" stroke="none" /></> },
  { n: "マテリアル", c: "text-[#cf5f68]", m: "", i: <><circle cx="8" cy="8" r="6" /><path d="M8 8V2a6 6 0 0 0-6 6zM8 8h6a6 6 0 0 1-6 6z" fill="currentColor" /></> },
];

function Properties() {
  return (
    <section className="mt-px flex min-h-0 grow flex-col overflow-hidden rounded-xs bg-[#303030]">
      <div className="flex h-[13px] shrink-0 items-center bg-[#2d2d2d] pl-[5px] pr-1">
        <IconBtn label="エディタータイプ" className="w-[15px] rounded-xs bg-[#262626] text-[#e0e0e0]"><Ic className="size-[9px]"><rect x="1" y="2" width="14" height="5" rx="2" fill="currentColor" /><rect x="1" y="9" width="14" height="5" rx="2" /><path d="M9 4.500h3" stroke="#222" /><path d="M3 11.500h5" strokeWidth="3" /></Ic><Chev /></IconBtn>
        <div className="mx-auto pr-2"><Search /></div>
        <IconBtn label="オプション" className="w-[9px] rounded-xs bg-[#262626]"><Chev /></IconBtn>
      </div>
      <div className="flex min-h-0 grow">
        <nav className="flex w-3.5 shrink-0 flex-col bg-[#1c1c1c] pt-1">
          {tabs.map((t) => (
            <button type="button" key={t.n} aria-label={t.n} className={"flex h-[15px] w-full shrink-0 items-center justify-center rounded-l-xs " + t.c + " " + t.m}><Ic className="size-[9px]">{t.i}</Ic></button>
          ))}
        </nav>
        <div className="grow px-1 pt-1">
          <div className="flex h-[11px] items-center gap-[3px] px-0.5 text-[#cfcfcf]">
            <Ic className="size-[9px]"><path d="M4.500 4.500h7v7h-7z" fill="white" stroke="white" /><path d="M1 4V1h3M12 1h3v3M15 12v3h-3M4 15H1v-3" stroke="#888" /></Ic>
            <span className="grow">FanHeater</span><Pin />
          </div>
          <button type="button" className="mt-2 flex h-[10px] w-full items-center rounded-xs bg-[#545454] px-0.5 text-[#e4e4e4]">
            <Ic className="size-2"><path d="M8 3v10M3 8h10" /></Ic><span className="grow">モディファイアーを追加</span>
          </button>
        </div>
      </div>
    </section>
  );
}

const Mouse = ({ d }: { d: string }) => <Ic className="size-2 text-[#aaa]"><rect x="3" y="1" width="10" height="14" rx="4" /><path d={d} fill="currentColor" /></Ic>;

export default function App() {
  return (
    <div className="flex h-screen flex-col overflow-hidden bg-[#161616] font-[Inter,'Noto_Sans_CJK_JP',sans-serif] text-[6px] leading-[11px]">
      <TitleBar />
      <TopBar />
      <div className="flex min-h-0 grow">
        <div className="flex min-w-0 grow flex-col">
          <Viewport />
          <Timeline />
        </div>
        <aside className="ml-0.5 flex w-[176px] shrink-0 flex-col">
          <Outliner />
          <Properties />
        </aside>
      </div>
      <footer className="flex h-[11px] shrink-0 items-center bg-[#181818] pl-[5px] pr-1.5 text-[#a4a4a4]">
        <span className="flex w-[113px] items-center gap-[5px]"><Mouse d="M3 6V3l5-2v5z" />選択</span>
        <span className="flex w-[113px] items-center gap-[5px]"><Mouse d="M7 2h2v5H7z" />ビューを回転</span>
        <span className="flex items-center gap-[5px]"><Mouse d="M8 1l5 2v3H8z" />メニュー呼び出し</span>
        <span className="ml-auto whitespace-nowrap">FanHeater | 頂点:0/82 | 辺:0/133 | 面:0/57 | 三角面:120 | オブジェクト:1/1 | 4.1.1</span>
      </footer>
    </div>
  );
}
